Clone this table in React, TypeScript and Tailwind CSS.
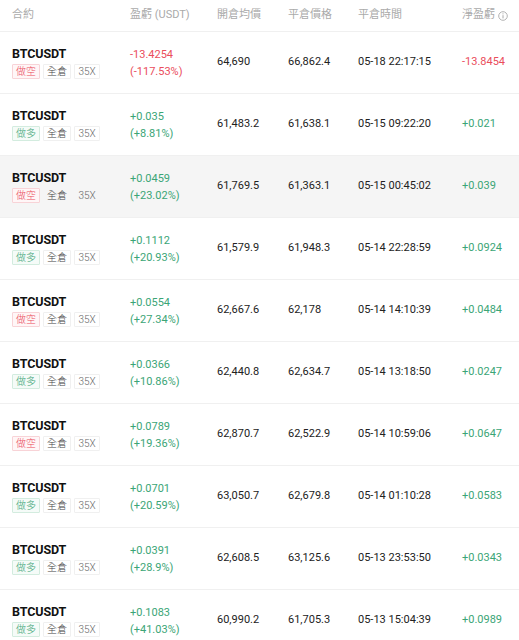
import React from "react";

type Row = {
  side: "short" | "long";
  pnl: string;
  pct: string;
  open: string;
  close: string;
  time: string;
  net: string;
};

const rows: Row[] = [
  { side: "short", pnl: "-13.4254", pct: "(-117.53%)", open: "64,690", close: "66,862.4", time: "05-18 22:17:15", net: "-13.8454" },
  { side: "long", pnl: "+0.035", pct: "(+8.81%)", open: "61,483.2", close: "61,638.1", time: "05-15 09:22:20", net: "+0.021" },
  { side: "short", pnl: "+0.0459", pct: "(+23.02%)", open: "61,769.5", close: "61,363.1", time: "05-15 00:45:02", net: "+0.039" },
  { side: "long", pnl: "+0.1112", pct: "(+20.93%)", open: "61,579.9", close: "61,948.3", time: "05-14 22:28:59", net: "+0.0924" },
  { side: "short", pnl: "+0.0554", pct: "(+27.34%)", open: "62,667.6", close: "62,178", time: "05-14 14:10:39", net: "+0.0484" },
  { side: "long", pnl: "+0.0366", pct: "(+10.86%)", open: "62,440.8", close: "62,634.7", time: "05-14 13:18:50", net: "+0.0247" },
  { side: "short", pnl: "+0.0789", pct: "(+19.36%)", open: "62,870.7", close: "62,522.9", time: "05-14 10:59:06", net: "+0.0647" },
  { side: "long", pnl: "+0.0701", pct: "(+20.59%)", open: "63,050.7", close: "62,679.8", time: "05-14 01:10:28", net: "+0.0583" },
  { side: "long", pnl: "+0.0391", pct: "(+28.9%)", open: "62,608.5", close: "63,125.6", time: "05-13 23:53:50", net: "+0.0343" },
  { side: "long", pnl: "+0.1083", pct: "(+41.03%)", open: "60,990.2", close: "61,705.3", time: "05-13 15:04:39", net: "+0.0989" },
];

const grid = "grid grid-cols-[130px_87px_71px_70px_104px_1fr] items-center";
const font = { fontFamily: "Roboto, 'Noto Sans CJK TC', 'Noto Sans CJK SC', sans-serif" };

export default function App() {
  return (
    <div className="w-[519px] h-[640px] overflow-hidden bg-white" style={font}>
      <div className={`${grid} h-[31px] text-[11px] text-[#aaaaaa]`}>
        <div className="pl-3">合約</div>
        <div>盈虧 (USDT)</div>
        <div>開倉均價</div>
        <div>平倉價格</div>
        <div>平倉時間</div>
        <div className="flex items-center gap-[3px]">
          淨盈虧
          <svg width="10" height="10" viewBox="0 0 10 10" fill="none">
            <circle cx="5" cy="5" r="4.3" stroke="#aaaaaa" strokeWidth="0.9" />
            <line x1="5" y1="4.2" x2="5" y2="7.4" stroke="#aaaaaa" strokeWidth="1" />
            <circle cx="5" cy="2.8" r="0.6" fill="#aaaaaa" />
          </svg>
        </div>
      </div>
      {rows.map((r, i) => {
        const pos = r.pnl.startsWith("+");
        const color = pos ? "text-[#3ba576]" : "text-[#ea4d5c]";
        const netColor = r.net.startsWith("+") ? "text-[#3ba576]" : "text-[#ea4d5c]";
        const hl = i === 2;
        return (
          <div
            key={i}
            className={`${grid} h-[62px] border-t border-[#f0f0f0] ${hl ? "bg-[#f5f5f5]" : "bg-white"}`}
          >
            <div className="pl-3 flex flex-col gap-[3px]">
              <div className="text-[12.5px] font-bold text-[#111] leading-[15px] tracking-[-0.1px]">BTCUSDT</div>
              <div className="flex gap-[3px] text-[10px] leading-[12px] font-light">
                {r.side === "short" ? (
                  <span className="h-[15px] w-[28px] flex items-center justify-center border border-[#f8d3d7] bg-[#fff6f7] text-[#ea4d5c] rounded-[1px]">做空</span>
                ) : (
                  <span className="h-[15px] w-[28px] flex items-center justify-center border border-[#d3ecdf] bg-[#f5fbf8] text-[#3ba576] rounded-[1px]">做多</span>
                )}
                <span className={`h-[15px] w-[28px] flex items-center justify-center border ${hl ? "border-[#f5f5f5]" : "border-[#f0f0f0]"} text-[#444] rounded-[1px]`}>全倉</span>
                <span className={`h-[15px] w-[26px] flex items-center justify-center border ${hl ? "border-[#f5f5f5]" : "border-[#f0f0f0]"} text-[#666] rounded-[1px]`}>35X</span>
              </div>
            </div>
            <div className={`flex flex-col text-[11px] leading-[17px] ${color}`}>
              <span>{r.pnl}</span>
              <span>{r.pct}</span>
            </div>
            <div className="text-[11px] text-[#222]">{r.open}</div>
            <div className="text-[11px] text-[#222]">{r.close}</div>
            <div className="text-[11px] text-[#222]">{r.time}</div>
            <div className={`text-[11px] ${netColor}`}>{r.net}</div>
          </div>
        );
      })}
    </div>
  );
}
